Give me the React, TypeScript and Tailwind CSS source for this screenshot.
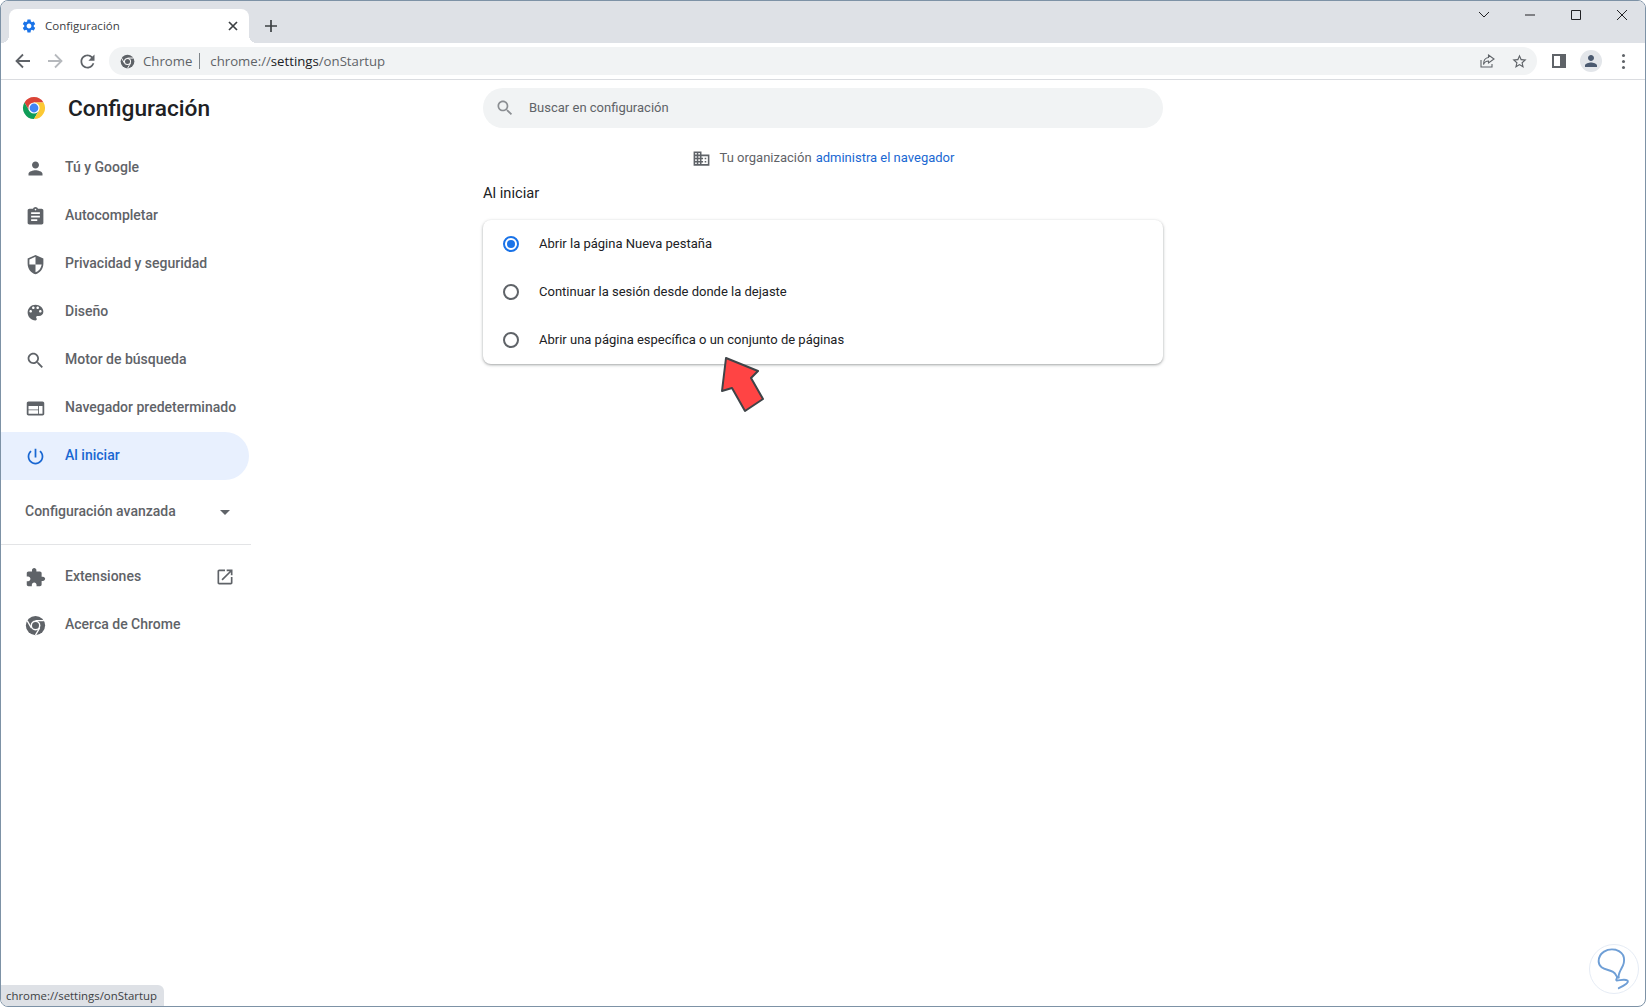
import React from "react";

const P = {
  person: "M12 12c2.21 0 4-1.79 4-4s-1.79-4-4-4-4 1.79-4 4 1.79 4 4 4zm0 2c-2.67 0-8 1.34-8 4v2h16v-2c0-2.66-5.33-4-8-4z",
  assignment: "M19 3h-4.18C14.4 1.84 13.3 1 12 1c-1.3 0-2.4.84-2.82 2H5c-1.1 0-2 .9-2 2v14c0 1.1.9 2 2 2h14c1.1 0 2-.9 2-2V5c0-1.1-.9-2-2-2zm-7 0c.55 0 1 .45 1 1s-.45 1-1 1-1-.45-1-1 .45-1 1-1zm2 14H7v-2h7v2zm3-4H7v-2h10v2zm0-4H7V7h10v2z",
  security: "M12 1L3 5v6c0 5.55 3.84 10.74 9 12 5.16-1.26 9-6.45 9-12V5l-9-4zm0 10.99h7c-.53 4.12-3.28 7.79-7 8.94V12H5V6.3l7-3.11v8.8z",
  palette: "M12 3c-4.97 0-9 4.03-9 9s4.03 9 9 9c.83 0 1.5-.67 1.5-1.5 0-.39-.15-.74-.39-1.01-.23-.26-.38-.61-.38-.99 0-.83.67-1.5 1.5-1.5H16c2.76 0 5-2.24 5-5 0-4.42-4.03-8-9-8zm-5.5 9c-.83 0-1.5-.67-1.5-1.5S5.67 9 6.5 9 8 9.67 8 10.5 7.33 12 6.5 12zm3-4C8.67 8 8 7.33 8 6.5S8.67 5 9.5 5s1.5.67 1.5 1.5S10.33 8 9.5 8zm5 0c-.83 0-1.5-.67-1.5-1.5S13.67 5 14.5 5s1.5.67 1.5 1.5S15.33 8 14.5 8zm3 4c-.83 0-1.5-.67-1.5-1.5S16.67 9 17.5 9s1.5.67 1.5 1.5-.67 1.5-1.5 1.5z",
  search: "M15.5 14h-.79l-.28-.27C15.41 12.59 16 11.11 16 9.5 16 5.91 13.09 3 9.5 3S3 5.91 3 9.5 5.91 16 9.5 16c1.61 0 3.09-.59 4.23-1.57l.27.28v.79l5 4.99L20.49 19l-4.99-5zm-6 0C7.01 14 5 11.99 5 9.5S7.01 5 9.5 5 14 7.01 14 9.5 11.99 14 9.5 14z",
  web: "M20 4H4c-1.1 0-1.99.9-1.99 2L2 18c0 1.1.9 2 2 2h16c1.1 0 2-.9 2-2V6c0-1.1-.9-2-2-2zm-5 14H4v-4h11v4zm0-5H4V9h11v4zm5 5h-4V9h4v9z",
  power: "M13 3h-2v10h2V3zm4.83 2.17l-1.42 1.42C17.99 7.86 19 9.81 19 12c0 3.87-3.13 7-7 7s-7-3.13-7-7c0-2.19 1.01-4.14 2.58-5.42L6.17 5.17C4.23 6.82 3 9.26 3 12c0 4.97 4.03 9 9 9s9-4.03 9-9c0-2.74-1.23-5.18-3.17-6.83z",
  extension: "M20.5 11H19V7c0-1.1-.9-2-2-2h-4V3.5C13 2.12 11.88 1 10.5 1S8 2.12 8 3.5V5H4c-1.1 0-1.99.9-1.99 2v3.8H3.5c1.49 0 2.7 1.21 2.7 2.7s-1.21 2.7-2.7 2.7H2V20c0 1.1.9 2 2 2h3.8v-1.5c0-1.49 1.21-2.7 2.7-2.7 1.49 0 2.7 1.21 2.7 2.7V22H17c1.1 0 2-.9 2-2v-4h1.5c1.38 0 2.5-1.12 2.5-2.5S21.88 11 20.5 11z",
  open: "M19 19H5V5h7V3H5c-1.11 0-2 .9-2 2v14c0 1.1.89 2 2 2h14c1.1 0 2-.9 2-2v-7h-2v7zM14 3v2h3.59l-9.83 9.83 1.41 1.41L19 6.41V10h2V3h-7z",
  business: "M12 7V3H2v18h20V7H12zM6 19H4v-2h2v2zm0-4H4v-2h2v2zm0-4H4V9h2v2zm0-4H4V5h2v2zm4 12H8v-2h2v2zm0-4H8v-2h2v2zm0-4H8V9h2v2zm0-4H8V5h2v2zm10 12h-8v-2h2v-2h-2v-2h2v-2h-2V9h8v10zm-2-8h-2v2h2v-2zm0 4h-2v2h2v-2z",
  gear: "M19.14 12.94c.04-.3.06-.61.06-.94 0-.32-.02-.64-.07-.94l2.03-1.58c.18-.14.23-.41.12-.61l-1.92-3.32c-.12-.22-.37-.29-.59-.22l-2.39.96c-.5-.38-1.03-.7-1.62-.94l-.36-2.54c-.04-.24-.24-.41-.48-.41h-3.84c-.24 0-.43.17-.47.41l-.36 2.54c-.59.24-1.13.57-1.62.94l-2.39-.96c-.22-.08-.47 0-.59.22L2.74 8.87c-.12.21-.08.47.12.61l2.03 1.58c-.05.3-.09.63-.09.94s.02.64.07.94l-2.03 1.58c-.18.14-.23.41-.12.61l1.92 3.32c.12.22.37.29.59.22l2.39-.96c.5.38 1.03.7 1.62.94l.36 2.54c.05.24.24.41.48.41h3.84c.24 0 .44-.17.47-.41l.36-2.54c.59-.24 1.13-.56 1.62-.94l2.39.96c.22.08.47 0 .59-.22l1.92-3.32c.12-.22.07-.47-.12-.61l-2.01-1.58zM12 15.6c-1.98 0-3.6-1.62-3.6-3.6s1.62-3.6 3.6-3.6 3.6 1.62 3.6 3.6-1.62 3.6-3.6 3.6z",
};

function I({ d, className }: { d: string; className?: string }) {
  return (
    <svg viewBox="0 0 24 24" fill="currentColor" className={className}>
      <path d={d} />
    </svg>
  );
}

function GrayChrome({ className }: { className?: string }) {
  return (
    <svg viewBox="0 0 24 24" className={className}>
      <circle cx="12" cy="12" r="11" fill="#5f6368" />
      <circle cx="12" cy="12" r="5.6" fill="#fff" />
      <circle cx="12" cy="12" r="4" fill="#5f6368" />
      <path d="M12 6.5H21.5M7.24 14.75L2.47 6.5M16.76 14.75L12 23" stroke="#fff" strokeWidth="1.5" fill="none" />
    </svg>
  );
}

function ColorChrome({ className }: { className?: string }) {
  return (
    <svg viewBox="0 0 24 24" className={className}>
      <path d="M2.47 6.5A11 11 0 0 1 21.53 6.5L12 6.5L7.24 14.75Z" fill="#db4437" />
      <path d="M2.47 6.5L7.24 14.75L16.76 14.75L12 23A11 11 0 0 1 2.47 6.5Z" fill="#0f9d58" />
      <path d="M21.53 6.5L12 6.5L16.76 14.75L12 23A11 11 0 0 0 21.53 6.5Z" fill="#fcc934" />
      <circle cx="12" cy="12" r="5.6" fill="#fff" />
      <circle cx="12" cy="12" r="4.4" fill="#4285f4" />
    </svg>
  );
}

function NavRow({ icon, label, active }: { icon: React.ReactNode; label: string; active?: boolean }) {
  return (
    <div
      className={
        active
          ? "flex h-12 w-[248px] items-center gap-[19px] rounded-r-full bg-[#e8f0fe] pl-6 text-[14px] font-medium text-[#1967d2]"
          : "flex h-12 w-[248px] items-center gap-[19px] pl-6 text-[14px] font-medium text-[#5f6368]"
      }
    >
      {icon}
      <span className="pb-[2px]">{label}</span>
    </div>
  );
}

function Radio({ on }: { on?: boolean }) {
  return (
    <span
      className={
        on
          ? "flex h-4 w-4 items-center justify-center rounded-full border-2 border-[#1a73e8]"
          : "flex h-4 w-4 items-center justify-center rounded-full border-2 border-[#5f6368]"
      }
    >
      {on ? <span className="h-2 w-2 rounded-full bg-[#1a73e8]" /> : null}
    </span>
  );
}

function RadioRow({ on, label }: { on?: boolean; label: string }) {
  return (
    <div className="flex h-12 items-center gap-5 pl-5 text-[13px] text-[#202124]">
      <Radio on={on} />
      <span>{label}</span>
    </div>
  );
}

const ic = "h-[21px] w-[21px] shrink-0";

export default function App() {
  return (
    <div className="h-[1007px] w-[1646px] overflow-hidden bg-white font-['Roboto',sans-serif]">
      <div className="relative flex h-full flex-col overflow-hidden rounded-lg border border-[#7d92a6] bg-white">
        {/* Tab strip */}
        <div className="flex h-[42px] shrink-0 items-end bg-[#dee1e6] pl-2">
          <div className="relative flex h-[34px] w-[240px] items-center rounded-t-lg bg-white pl-[12px] pr-[8px] text-[#3c4043]">
            <span className="absolute bottom-0 left-[-8px] h-2 w-2 bg-[radial-gradient(circle_at_0_0,#dee1e6_8px,#fff_8px)]" />
            <span className="absolute bottom-0 right-[-8px] h-2 w-2 bg-[radial-gradient(circle_at_100%_0,#dee1e6_8px,#fff_8px)]" />
            <I d={P.gear} className="h-4 w-4 shrink-0 text-[#1a73e8]" />
            <span className="ml-[8px] flex-1 font-['Open_Sans',sans-serif] text-[11.5px]">Configuración</span>
            <svg viewBox="0 0 16 16" className="h-4 w-4 text-[#3c4043]">
              <path d="M4 4L12 12M12 4L4 12" stroke="currentColor" strokeWidth="1.7" fill="none" />
            </svg>
          </div>
          <div className="ml-[14px] flex h-[34px] w-4 items-center justify-center">
            <svg viewBox="0 0 16 16" className="h-4 w-4 text-[#3c4043]">
              <path d="M8 2V14M2 8H14" stroke="currentColor" strokeWidth="1.7" fill="none" />
            </svg>
          </div>
          <div className="flex-1" />
          <div className="flex h-[42px] items-start pr-0 text-[#202124]">
            {[
              <path key="a" d="M1 3L6 8L11 3" />,
              <path key="b" d="M1 6H11" />,
              <path key="c" d="M1.5 1.5H10.5V10.5H1.5Z" />,
              <path key="d" d="M1 1L11 11M11 1L1 11" />,
            ].map((p, i) => (
              <div key={i} className="flex h-[27px] w-[46px] items-center justify-center">
                <svg viewBox="0 0 12 12" className="h-3 w-3" fill="none" stroke="currentColor" strokeWidth="1">
                  {p}
                </svg>
              </div>
            ))}
          </div>
        </div>

        {/* Toolbar */}
        <div className="flex h-[37px] shrink-0 items-center border-b border-[#dadce0] bg-white text-[#5f6368]">
          <div className="flex w-[108px] items-center pl-3">
            <svg viewBox="0 0 20 20" className="h-5 w-5 text-[#5f6368]">
              <path d="M17 10H4M10 3.5L3.5 10L10 16.5" stroke="currentColor" strokeWidth="1.8" fill="none" />
            </svg>
            <svg viewBox="0 0 20 20" className="ml-3 h-5 w-5 text-[#b6b9bd]">
              <path d="M3 10H16M10 3.5L16.5 10L10 16.5" stroke="currentColor" strokeWidth="1.8" fill="none" />
            </svg>
            <svg viewBox="0 0 24 24" className="ml-3 h-[21px] w-[21px]" fill="currentColor">
              <path d="M17.65 6.35C16.2 4.9 14.21 4 12 4c-4.42 0-7.99 3.58-7.99 8s3.57 8 7.99 8c3.73 0 6.84-2.55 7.73-6h-2.08c-.82 2.33-3.04 4-5.65 4-3.31 0-6-2.69-6-6s2.69-6 6-6c1.66 0 3.14.69 4.22 1.78L13 11h7V4l-2.35 2.35z" />
            </svg>
          </div>
          <div className="flex h-7 w-[1428px] items-center rounded-full bg-[#f1f3f4] pl-[11px] font-['Open_Sans',sans-serif] text-[13.2px]">
            <GrayChrome className="h-[15px] w-[15px] shrink-0" />
            <span className="ml-[8px] pt-px text-[#5f6368]">Chrome</span>
            <span className="ml-[7px] h-[16px] w-px bg-[#80868b]" />
            <span className="ml-[10px] pt-px text-[#5f6368]">
              chrome://<span className="text-[#202124]">settings</span>/onStartup
            </span>
            <span className="flex-1" />
            <svg viewBox="0 0 16 16" className="h-4 w-4" fill="none" stroke="#5f6368" strokeWidth="1.1">
              <path d="M2 7V14H13V11" />
              <path d="M9.5 2L15 6L9.5 10V8C7 8 5.5 9 4.5 11.5C4.5 7.5 6.5 4.8 9.5 4.5Z" />
            </svg>
            <svg viewBox="0 0 24 24" className="ml-[16px] h-[17px] w-[17px]" fill="#5f6368">
              <path d="M22 9.24l-7.19-.62L12 2 9.19 8.63 2 9.24l5.46 4.73L5.82 21 12 17.27 18.18 21l-1.63-7.03L22 9.24zM12 15.4l-3.76 2.27 1-4.28-3.32-2.88 4.38-.38L12 6.1l1.71 4.04 4.38.38-3.32 2.88 1 4.28L12 15.4z" />
            </svg>
            <span className="w-[9px]" />
          </div>
          <div className="ml-[15px] h-[14px] w-[14px] border-2 border-r-[6px] border-[#5f6368]" />
          <div className="ml-[14px] flex h-[22px] w-[22px] items-center justify-center overflow-hidden rounded-full bg-[#e3e6ea]">
            <I d={P.person} className="h-[18px] w-[18px] text-[#4b5a70]" />
          </div>
          <div className="ml-[20px] flex flex-col gap-[3px]">
            <span className="h-[3px] w-[3px] rounded-full bg-[#5f6368]" />
            <span className="h-[3px] w-[3px] rounded-full bg-[#5f6368]" />
            <span className="h-[3px] w-[3px] rounded-full bg-[#5f6368]" />
          </div>
        </div>

        {/* Page */}
        <div className="flex flex-1">
          <aside className="w-[248px] shrink-0">
            <div className="flex h-[56px] items-center pl-[21px]">
              <ColorChrome className="h-6 w-6" />
              <span className="ml-[22px] pt-[2px] text-[22.7px] font-medium text-[#202124]">Configuración</span>
            </div>
            <div className="mt-[8px]">
              <NavRow icon={<I d={P.person} className={ic} />} label="Tú y Google" />
              <NavRow icon={<I d={P.assignment} className={ic} />} label="Autocompletar" />
              <NavRow icon={<I d={P.security} className={ic} />} label="Privacidad y seguridad" />
              <NavRow icon={<I d={P.palette} className={ic} />} label="Diseño" />
              <NavRow icon={<I d={P.search} className={ic} />} label="Motor de búsqueda" />
              <NavRow icon={<I d={P.web} className={ic} />} label="Navegador predeterminado" />
              <NavRow active icon={<I d={P.power} className={ic} />} label="Al iniciar" />
            </div>
            <div className="mt-[8px] flex h-12 items-center justify-between pl-6 pr-[19px] text-[14px] font-medium text-[#5f6368]">
              <span className="pb-[2px]">Configuración avanzada</span>
              <span className="h-0 w-0 border-x-[5px] border-t-[5px] border-x-transparent border-t-[#5f6368]" />
            </div>
            <div className="mt-[8px] h-px w-[250px] bg-[#e3e4e6]" />
            <div className="relative mt-[8px]">
              <NavRow icon={<I d={P.extension} className={ic} />} label="Extensiones" />
              <I d={P.open} className="absolute left-[214px] top-[14px] h-5 w-5 text-[#5f6368]" />
              <NavRow icon={<GrayChrome className={ic} />} label="Acerca de Chrome" />
            </div>
          </aside>

          <main className="ml-[234px] w-[680px] pt-2">
            <div className="flex h-10 items-center rounded-full bg-[#f1f3f4] pl-[12px] text-[13px] text-[#5f6368]">
              <I d={P.search} className="h-5 w-5 text-[#8b8e92]" />
              <span className="ml-[14px]">Buscar en configuración</span>
            </div>
            <div className="mt-[20px] flex h-[20px] items-center justify-center text-[13px] text-[#5f6368]">
              <I d={P.business} className="h-[19px] w-[19px] text-[#5f6368]" />
              <span className="ml-[9px]">Tu organización</span>
              <span className="ml-1 text-[#1967d2]">administra el navegador</span>
            </div>
            <div className="mt-[15px] text-[14.7px] leading-5 text-[#202124]">Al iniciar</div>
            <div className="relative mt-[17px] rounded-lg bg-white shadow-[0_1px_2px_rgba(60,64,67,0.3),0_1px_3px_1px_rgba(60,64,67,0.15)]">
              <RadioRow on label="Abrir la página Nueva pestaña" />
              <RadioRow label="Continuar la sesión desde donde la dejaste" />
              <RadioRow label="Abrir una página específica o un conjunto de páginas" />
              {/* Red annotation arrow */}
              <svg viewBox="0 0 60 70" className="absolute left-[233px] top-[130px] h-[70px] w-[60px]">
                <path
                  d="M10 8L42 21L35 28L47 49L29 61L16 38L6 41Z"
                  fill="#ff4444"
                  stroke="#3f4448"
                  strokeWidth="2"
                  strokeLinejoin="round"
                />
              </svg>
            </div>
          </main>
        </div>

        {/* Status bubble */}
        <div className="absolute bottom-0 left-0 flex h-[21px] w-[163px] items-center rounded-tr-md bg-[#dee1e6] pl-[5px] font-['Open_Sans',sans-serif] text-[11.4px] text-[#3c4043]">
          chrome://settings/onStartup
        </div>

        {/* Watermark */}
        <div className="absolute bottom-[12px] right-[6px] flex h-[50px] w-[50px] items-center justify-center rounded-full border border-[#e6ecf5] bg-white">
          <svg viewBox="0 0 50 50" className="h-[50px] w-[50px]" fill="none" stroke="#6f9fd6" strokeWidth="2" strokeLinecap="round">
            <path d="M30 34C29 31 31 28 33 24C37 17 37 8 27 5C18 3 9 8 9 17C9 25 18 25 24 28C26 29 27 31 28 33C29 35 26 36 28 37C31 37 36 35 39 37C41 39 36 42 30 45" />
          </svg>
        </div>
      </div>
    </div>
  );
}
